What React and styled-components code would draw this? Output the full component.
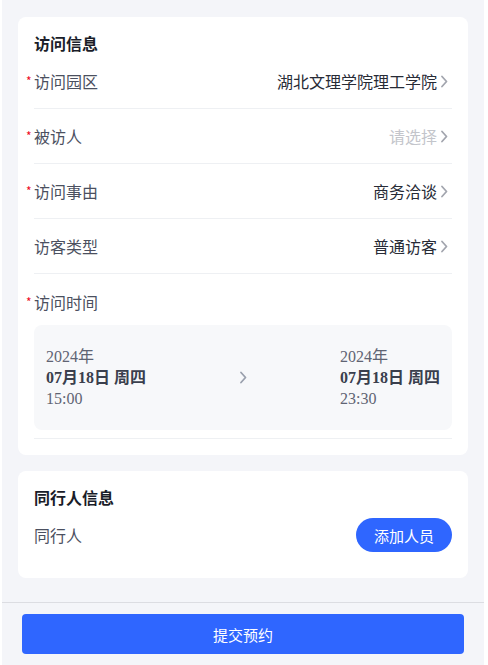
import React from "react";
import styled, { createGlobalStyle } from "styled-components";

const GlobalStyle = createGlobalStyle`
  html, body {
    margin: 0;
    padding: 0;
    background: #ffffff;
  }
  body {
    font-family: "Noto Sans CJK SC", "Noto Sans", sans-serif;
  }
  * {
    box-sizing: border-box;
  }
`;

const Page = styled.div`
  margin-left: 2px;
  width: 482px;
  min-height: 665px;
  background: #f4f5f9;
  display: flex;
  flex-direction: column;
`;

const Content = styled.div`
  padding: 17px 16px 24px;
  display: flex;
  flex-direction: column;
  gap: 16px;
`;

const Card = styled.section`
  background: #ffffff;
  border-radius: 8px;
  padding: 16px;
`;

const Title = styled.h3`
  margin: 0;
  font-size: 16px;
  line-height: 21px;
  font-weight: 700;
  color: #1a1d29;
`;

const Row = styled.div`
  height: ${(p) => p.$height || 55}px;
  display: flex;
  align-items: center;
  justify-content: space-between;
  border-bottom: ${(p) => (p.$noBorder ? "none" : "1px solid #eef0f3")};
`;

const Label = styled.span`
  position: relative;
  font-size: 16px;
  line-height: 22px;
  color: #4b5060;

  ${(p) =>
    p.$required &&
    `
    &::before {
      content: "*";
      position: absolute;
      left: -8px;
      top: 0;
      font-size: 12px;
      color: #ee0a24;
    }
  `}
`;

const Value = styled.span`
  display: flex;
  align-items: center;
  gap: 3px;
  padding-right: 4px;
  font-size: 16px;
  line-height: 22px;
  color: ${(p) => (p.$placeholder ? "#c3c5cb" : "#272b36")};
`;

const TimeBlock = styled.div`
  display: flex;
  flex-direction: column;
  padding: 17px 0 8px;
  border-bottom: 1px solid #eef0f3;
`;

const TimeBox = styled.div`
  margin-top: 12px;
  background: #f7f8fa;
  border-radius: 8px;
  padding: 21px 12px;
  display: grid;
  grid-template-columns: 1fr 20px 1fr;
  align-items: center;
`;

const TimeCol = styled.div`
  display: flex;
  flex-direction: column;
  font-family: "Liberation Serif", "Noto Sans CJK SC", serif;
  font-size: 16px;
  line-height: 21px;
  color: #5f6473;
  justify-self: ${(p) => (p.$end ? "end" : "start")};

  strong {
    font-weight: 700;
    color: #3a3f4d;
  }
`;

const Arrow = styled.div`
  display: flex;
  justify-content: center;
`;

const AddButton = styled.button`
  width: 96px;
  height: 34px;
  border: none;
  border-radius: 17px;
  background: #2f66ff;
  color: #ffffff;
  font-family: inherit;
  font-size: 15px;
`;

const Footer = styled.footer`
  border-top: 1px solid #dcdde2;
  padding: 11px 20px 10px;
`;

const SubmitButton = styled.button`
  width: 100%;
  height: 40px;
  border: none;
  border-radius: 4px;
  background: #2f66ff;
  color: #ffffff;
  font-family: inherit;
  font-size: 15px;
`;

const Chevron = ({ color = "#a2a5ae" }) => (
  <svg width="8" height="13" viewBox="0 0 8 13" fill="none">
    <path d="M2 1.5 L6.5 6.5 L2 11.5" stroke={color} strokeWidth="1.8" strokeLinecap="round" strokeLinejoin="round" />
  </svg>
);

const fields = [
  { label: "访问园区", value: "湖北文理学院理工学院", required: true },
  { label: "被访人", value: "请选择", required: true, placeholder: true },
  { label: "访问事由", value: "商务洽谈", required: true },
  { label: "访客类型", value: "普通访客" },
];

const App = () => {
  return (
    <>
      <GlobalStyle />
      <Page>
        <Content>
          <Card>
            <Title>访问信息</Title>
            {fields.map((f) => (
              <Row key={f.label}>
                <Label $required={f.required}>{f.label}</Label>
                <Value $placeholder={f.placeholder}>
                  {f.value}
                  <Chevron />
                </Value>
              </Row>
            ))}
            <TimeBlock>
              <Label $required>访问时间</Label>
              <TimeBox>
                <TimeCol>
                  <span>2024年</span>
                  <strong>07月18日 周四</strong>
                  <span>15:00</span>
                </TimeCol>
                <Arrow>
                  <Chevron color="#9aa0ad" />
                </Arrow>
                <TimeCol $end>
                  <span>2024年</span>
                  <strong>07月18日 周四</strong>
                  <span>23:30</span>
                </TimeCol>
              </TimeBox>
            </TimeBlock>
          </Card>
          <Card>
            <Title>同行人信息</Title>
            <Row $noBorder $height={54}>
              <Label>同行人</Label>
              <AddButton>添加人员</AddButton>
            </Row>
          </Card>
        </Content>
        <Footer>
          <SubmitButton>提交预约</SubmitButton>
        </Footer>
      </Page>
    </>
  );
};

export default App;
